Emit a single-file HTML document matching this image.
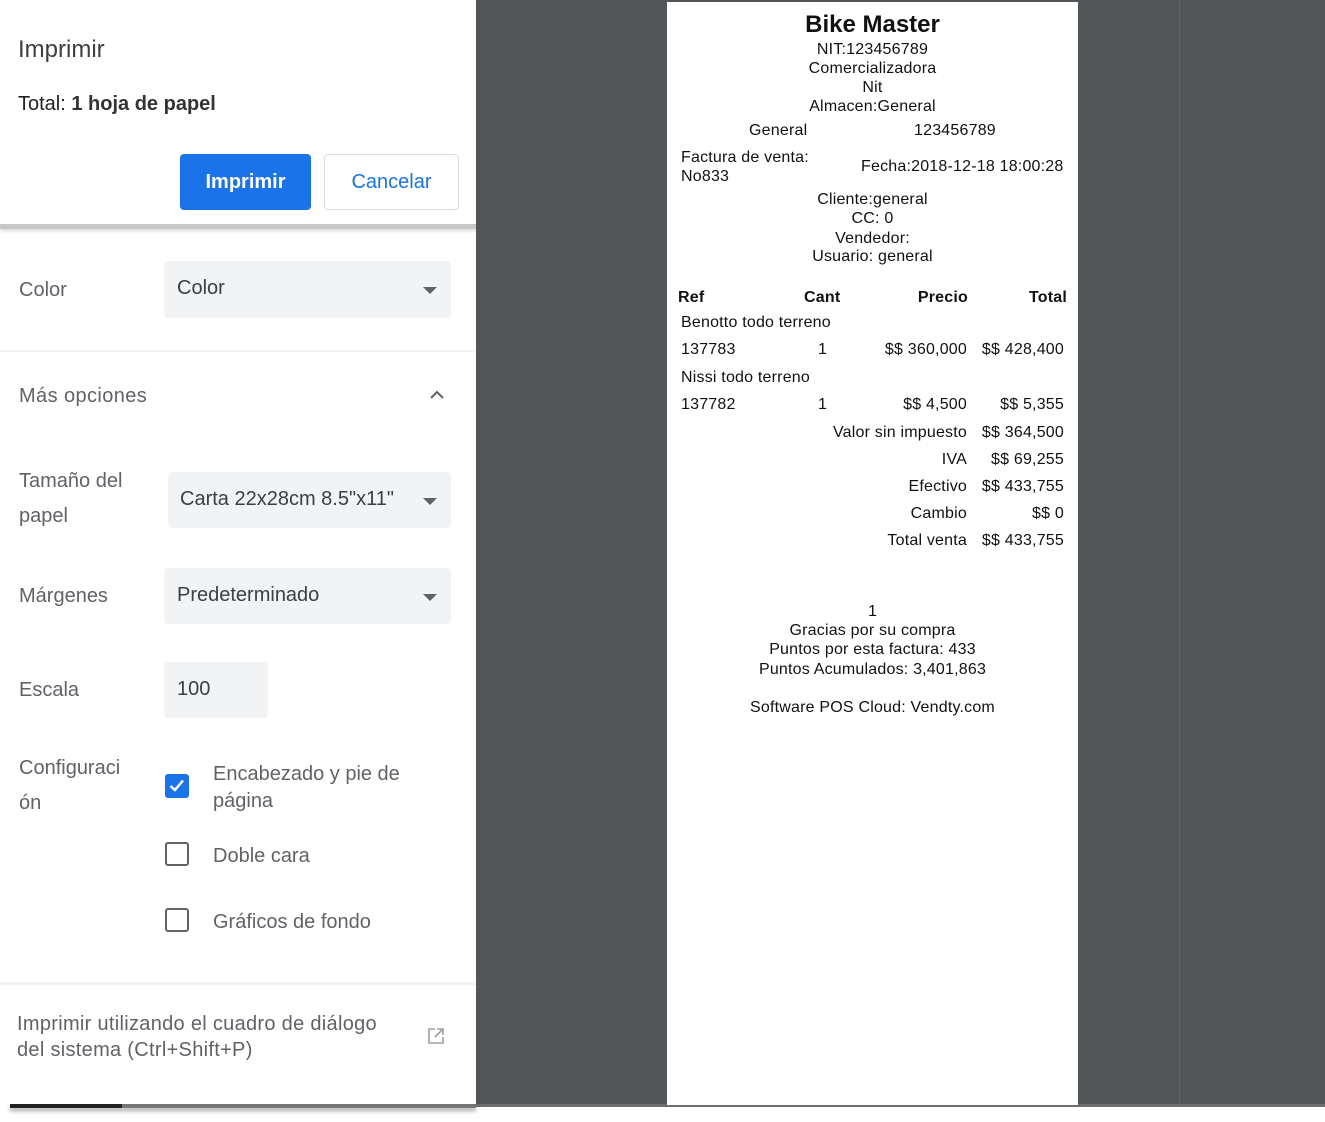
<!DOCTYPE html>
<html><head><meta charset="utf-8"><style>
body{margin:0;width:1325px;height:1122px;position:relative;background:#fff;overflow:hidden;font-family:"Liberation Sans",sans-serif}
.a{position:absolute;white-space:nowrap}
.l{color:#5f6368;font-size:20px}
.sel{position:absolute;background:#f1f3f4;border-radius:4px}
.sel span{position:absolute;left:13px;top:16px;font-size:20px;color:#3c4043}
.tri{position:absolute;right:14px;top:26px;width:0;height:0;border-left:7px solid transparent;border-right:7px solid transparent;border-top:7px solid #5f6368}
.r{position:absolute;font-size:16px;letter-spacing:0.2px;color:#111;white-space:nowrap}
.c{text-align:center;width:411px;left:0}
.rt{text-align:right}
.cb{position:absolute;left:165px;width:24px;height:24px;border:2px solid #5f6368;border-radius:3px;box-sizing:border-box}
</style></head><body>
<div class="a" style="left:476px;top:0;width:849px;height:1105px;background:#525659"></div>
<div class="a" style="left:1179px;top:0;width:1px;height:1105px;background:#5e6266"></div>
<div class="a" style="left:476px;top:1104px;width:849px;height:3px;background:#6b6e70"></div>
<div class="a" style="left:10px;top:1104px;width:466px;height:4px;background:#777;box-shadow:0 3px 4px rgba(0,0,0,.35)"></div>
<div class="a" style="left:10px;top:1104px;width:112px;height:4px;background:#222"></div>
<div class="a" style="left:0;top:0;width:476px;height:1104px;background:#fff"></div>

<div class="a" style="left:18px;top:36px;font-size:24px;color:#3c4043">Imprimir</div>
<div class="a" style="left:18px;top:93px;font-size:20px;color:#202124">Total: <span style="font-weight:bold;color:#333">1 hoja de papel</span></div>
<div class="a" style="left:180px;top:154px;width:131px;height:56px;background:#1a73e8;border-radius:4px;color:#fff;font-size:20px;font-weight:bold;text-align:center;line-height:56px">Imprimir</div>
<div class="a" style="left:324px;top:154px;width:135px;height:56px;border:1px solid #dadce0;box-sizing:border-box;border-radius:4px;color:#1a73e8;font-size:20px;text-align:center;line-height:54px">Cancelar</div>
<div class="a" style="left:0;top:224px;width:476px;height:5px;background:#c8c8c8;box-shadow:0 2px 3px rgba(0,0,0,.15)"></div>

<div class="a l" style="left:19px;top:279px">Color</div>
<div class="sel" style="left:164px;top:261px;width:287px;height:57px"><span>Color</span><div class="tri"></div></div>
<div class="a" style="left:0;top:350px;width:476px;height:2px;background:#f1f3f4"></div>
<div class="a l" style="left:19px;top:385px;letter-spacing:0.4px">Más opciones</div>
<svg class="a" style="left:428px;top:387px" width="18" height="14"><path d="M3 11 L9 5 L15 11" stroke="#5f6368" stroke-width="2" fill="none"/></svg>
<div class="a l" style="left:19px;top:464px;line-height:35px">Tamaño del<br>papel</div>
<div class="sel" style="left:168px;top:472px;width:283px;height:56px"><span style="left:12px;top:16px">Carta 22x28cm 8.5"x11"</span><div class="tri"></div></div>
<div class="a l" style="left:19px;top:585px">Márgenes</div>
<div class="sel" style="left:164px;top:568px;width:287px;height:56px"><span>Predeterminado</span><div class="tri"></div></div>
<div class="a l" style="left:19px;top:679px">Escala</div>
<div class="sel" style="left:164px;top:662px;width:104px;height:56px"><span>100</span></div>
<div class="a l" style="left:19px;top:751px;line-height:35px">Configuraci<br>ón</div>
<div class="cb" style="top:774px;background:#1a73e8;border-color:#1a73e8"><svg width="20" height="20" style="position:absolute;left:0;top:0"><path d="M3.5 10 L8 14 L16 4.5" stroke="#fff" stroke-width="2.5" fill="none"/></svg></div>
<div class="a l" style="left:213px;top:761px;line-height:27px">Encabezado y pie de<br>página</div>
<div class="cb" style="top:842px"></div>
<div class="a l" style="left:213px;top:845px">Doble cara</div>
<div class="cb" style="top:908px"></div>
<div class="a l" style="left:213px;top:911px">Gráficos de fondo</div>
<div class="a" style="left:0;top:982px;width:476px;height:3px;background:#f1f3f4"></div>
<div class="a l" style="left:17px;top:1011px;line-height:26px;font-size:20px;letter-spacing:0.3px">Imprimir utilizando el cuadro de diálogo<br>del sistema (Ctrl+Shift+P)</div>
<svg class="a" style="left:426px;top:1026px" width="20" height="20"><path d="M9 3 H3 V17 H17 V11 M11 3 H17 V9 M17 3 L9 11" stroke="#9aa0a6" stroke-width="1.6" fill="none"/></svg>

<div class="a" style="left:667px;top:2px;width:411px;height:1103px;background:#fff">
<div class="r c" style="top:9px;font-size:24px;font-weight:bold;letter-spacing:0">Bike Master</div>
<div class="r c" style="top:39px">NIT:123456789</div>
<div class="r c" style="top:58px">Comercializadora</div>
<div class="r c" style="top:77px">Nit</div>
<div class="r c" style="top:96px">Almacen:General</div>
<div class="r" style="left:82px;top:120px">General</div>
<div class="r" style="left:247px;top:120px">123456789</div>
<div class="r" style="left:14px;top:146px;line-height:19px">Factura de venta:<br>No833</div>
<div class="r" style="left:194px;top:156px">Fecha:2018-12-18 18:00:28</div>
<div class="r c" style="top:189px">Cliente:general</div>
<div class="r c" style="top:208px">CC: 0</div>
<div class="r c" style="top:228px">Vendedor:</div>
<div class="r c" style="top:246px">Usuario: general</div>
<div class="r" style="left:11px;top:287px;font-weight:bold">Ref</div>
<div class="r" style="left:137px;top:287px;font-weight:bold">Cant</div>
<div class="r rt" style="right:110px;top:287px;font-weight:bold">Precio</div>
<div class="r rt" style="right:11px;top:287px;font-weight:bold">Total</div>
<div class="r" style="left:14px;top:312px">Benotto todo terreno</div>
<div class="r" style="left:14px;top:339px">137783</div>
<div class="r" style="left:151px;top:339px">1</div>
<div class="r rt" style="right:111px;top:339px">$$ 360,000</div>
<div class="r rt" style="right:14px;top:339px">$$ 428,400</div>
<div class="r" style="left:14px;top:367px">Nissi todo terreno</div>
<div class="r" style="left:14px;top:394px">137782</div>
<div class="r" style="left:151px;top:394px">1</div>
<div class="r rt" style="right:111px;top:394px">$$ 4,500</div>
<div class="r rt" style="right:14px;top:394px">$$ 5,355</div>
<div class="r rt" style="right:111px;top:422px">Valor sin impuesto</div>
<div class="r rt" style="right:14px;top:422px">$$ 364,500</div>
<div class="r rt" style="right:111px;top:449px">IVA</div>
<div class="r rt" style="right:14px;top:449px">$$ 69,255</div>
<div class="r rt" style="right:111px;top:476px">Efectivo</div>
<div class="r rt" style="right:14px;top:476px">$$ 433,755</div>
<div class="r rt" style="right:111px;top:503px">Cambio</div>
<div class="r rt" style="right:14px;top:503px">$$ 0</div>
<div class="r rt" style="right:111px;top:530px">Total venta</div>
<div class="r rt" style="right:14px;top:530px">$$ 433,755</div>
<div class="r c" style="top:601px">1</div>
<div class="r c" style="top:620px">Gracias por su compra</div>
<div class="r c" style="top:639px">Puntos por esta factura: 433</div>
<div class="r c" style="top:659px">Puntos Acumulados: 3,401,863</div>
<div class="r c" style="top:697px">Software POS Cloud: Vendty.com</div>
</div>
</body></html>
